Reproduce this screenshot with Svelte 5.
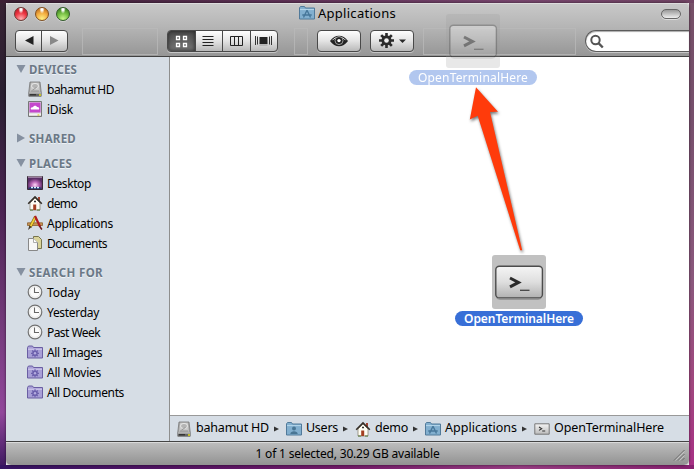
<script>
  const sections = [
    { name: 'DEVICES', w: 48, open: true, items: [['hd', 'bahamut HD', 67], ['idisk', 'iDisk', 26]] },
    { name: 'SHARED', w: 47, open: false, items: [] },
    { name: 'PLACES', w: 43, open: true, items: [['desktop', 'Desktop', 44], ['home', 'demo', 30], ['apps', 'Applications', 66], ['docs', 'Documents', 60]] },
    { name: 'SEARCH FOR', w: 74, open: true, items: [['clock', 'Today', 33], ['clock', 'Yesterday', 52], ['clock', 'Past Week', 53], ['smart', 'All Images', 55], ['smart', 'All Movies', 54], ['smart', 'All Documents', 77]] }
  ];
  const path = [['hd', 'bahamut HD', 73], ['users', 'Users', 32], ['home', 'demo', 33], ['appfolder', 'Applications', 72], ['term', 'OpenTerminalHere', 110]];
  const teeth = [0, 45, 90, 135, 180, 225, 270, 315];

  // Tracks a label out to the requested width.
  function fit(node, width) {
    const natural = node.getBoundingClientRect().width;
    node.style.letterSpacing = (width - natural) / node.textContent.length + 'px';
  }
</script>

{#snippet icon(kind)}
  <svg class="ic" width="16" height="16" viewBox="0 0 16 16">
    {#if kind === 'hd'}
      <path d="M3 1h10l1.2 10v4.3H1.8V11z" fill="#a9a9a9" stroke="#777" stroke-width=".8" />
      <path d="M4.2 1.8h7.6l1 8.7H3.2z" fill="#c9c9c9" />
      <ellipse cx="8" cy="5" rx="3.5" ry="2.6" fill="#b4b4b4" stroke="#efefef" stroke-width=".8" />
      <path d="M5.5 9l4-2.5M4 10h8" stroke="#8c8c8c" stroke-width=".9" />
      <path d="M1.8 11.5h12.4v3.8H1.8z" fill="#666" /><path d="M2 12h12" stroke="#ddd" />
      <path d="M3 13.8h6" stroke="#222" /><path d="M12 14h2" stroke="#e5df18" stroke-width="1.5" />
    {:else if kind === 'idisk'}
      <path d="M1.5.5h13v15h-13z" fill="#d8d8d8" stroke="#777" />
      <path d="M2.5 1.5h11v10h-11z" fill="#c446cc" />
      <path d="M4 8.5c-1-2 1-2.6 2-2.2.6-2 3.4-2 4-.3 2-.2 2.6 1.4 2 2.5z" fill="#fff" />
      <path d="M2 13.2h12" stroke="#fff" /><path d="M10.5 14h1.8" stroke="#d8c800" />
    {:else if kind === 'desktop'}
      <defs><radialGradient id="aurora" cx=".5" cy=".65"><stop offset="0" stop-color="#ffd8f6" /><stop offset=".5" stop-color="#b765b4" /><stop offset="1" stop-color="#5a2e66" /></radialGradient></defs>
      <path d="M.5 1.5h15v13H.5z" fill="url(#aurora)" stroke="#382939" />
      <path d="M1 2h14" stroke="#d5c6d6" /><path d="M1 14l2-2h10l2 2z" fill="#273a70" />
      <path d="M4 12.5h2m1 0h2m1 0h2" stroke="#d7f0ff" stroke-width="1.7" />
    {:else if kind === 'home'}
      <path d="M3 8l5-5 5 5v7H3z" fill="#fffdf3" stroke="#8e8775" stroke-width=".8" />
      <path d="M11 2h2v4h-2z" fill="#a04331" />
      <path d="M1.2 8.7L8 1.9l6.8 6.8" fill="none" stroke="#352f29" stroke-width="1.6" />
      <path d="M6.2 9.5h3V15h-3z" fill="#a33e20" /><path d="M7 6.5h2" stroke="#333" stroke-width="1.4" /><path d="M3 15h3M10 15h3" stroke="#527736" />
    {:else if kind === 'apps'}
      <path d="M.5 7.8h15v2.7H.5z" fill="#c79457" stroke="#815321" stroke-width=".7" />
      <path d="M8.6 1.5L3.2 12" stroke="#806412" stroke-width="2.9" /><path d="M8.6 1.5L3.5 11.5" stroke="#f2cd39" stroke-width="1.7" />
      <path d="M2.4 10.6L1 15l3.7-3z" fill="#473b2d" />
      <path d="M8 1l5 10.5" stroke="#b01c22" stroke-width="2.2" /><path d="M12.5 11l2.4 3.5" stroke="#70191d" stroke-width="1.5" />
    {:else if kind === 'docs'}
      <path d="M6.5 1.5h5l3 3v9h-8z" fill="#d9d39a" stroke="#77744d" />
      <path d="M1.5 3.5h5l4 4v8h-9z" fill="#f7f7f7" stroke="#888" /><path d="M6.5 3.5v4h4" fill="#fff" stroke="#999" stroke-width=".8" />
    {:else if kind === 'clock'}
      <circle cx="8" cy="8" r="6.8" fill="#fbfbfb" stroke="#727272" stroke-width="1.2" />
      <circle cx="8" cy="8" r="5.3" fill="none" stroke="#e1e1e1" stroke-width=".8" />
      <path d="M7.5 3.5v5H12" fill="none" stroke="#666" stroke-width="1.1" />
    {:else if kind === 'smart'}
      <path d="M.5 14V3.5L1.5 2h4l1 1.5h9V14z" fill="#a89fd6" stroke="#6a5ea3" />
      <path d="M1 5.2h14" stroke="#d5cff1" />
      <g fill="#6d61ad"><circle cx="8" cy="9.3" r="2.8" />{#each teeth as a}<path d="M7.4 5.3h1.2v2H7.4z" transform="rotate({a} 8 9.3)" />{/each}</g>
      <circle cx="8" cy="9.3" r="1.2" fill="#b4acdf" />
    {:else if kind === 'users' || kind === 'appfolder'}
      <path d="M.5 14V2.8L1.5 1.5h4l1 1.5h9v11z" fill="#82afcf" stroke="#517a9a" />
      <path d="M1 4.6h14" stroke="#b7d7ea" />
      {#if kind === 'users'}
        <circle cx="8" cy="7.5" r="2" fill="#487594" /><path d="M4.3 13c0-3.8 7.4-3.8 7.4 0z" fill="#487594" />
      {:else}
        <path d="M8 5.3L4.5 12.5M8 5.3l3.5 7.2M3.3 10h9.4" fill="none" stroke="#47779a" stroke-width="1.4" />
      {/if}
    {:else}
      <defs><linearGradient id="mini" x2="0" y2="1"><stop offset="0" stop-color="#f4f4f4" /><stop offset="1" stop-color="#bbb" /></linearGradient></defs>
      <path d="M.8 2.8h14.4v10.4H.8z" fill="url(#mini)" stroke="#777" />
      <path d="M5 6l2.7 1.7L5 9.4M8.2 10h3" fill="none" stroke="#333" stroke-width="1.1" />
    {/if}
  </svg>
{/snippet}

{#snippet terminal()}
  <span class="tile">
    <svg width="54" height="54" viewBox="0 0 54 54">
      <defs><linearGradient id="key" x2="0" y2="1"><stop offset="0" stop-color="#f5f5f5" /><stop offset=".5" stop-color="#dedede" /><stop offset="1" stop-color="#b1b1b1" /></linearGradient></defs>
      <rect x="4" y="12" width="46" height="32.5" rx="4" fill="none" stroke="#999" stroke-width="1" />
      <rect x="3.8" y="11.3" width="46.6" height="31.6" rx="3.5" fill="url(#key)" stroke="#4c4c4c" stroke-width="1.4" />
      <path d="M18 23l8.5 4.4-8.5 4.4" fill="none" stroke="#2b2b2b" stroke-width="3" />
      <path d="M28 35.3h9.5" stroke="#444" stroke-width="1.3" />
    </svg>
  </span>
{/snippet}

<div class="desktop">
  <div class="window">
    <header>
      <div class="title">
        <div class="lights"><i class="red"></i><i class="amber"></i><i class="green"></i></div>
        <div class="name">{@render icon('appfolder')}<span use:fit={78}>Applications</span></div>
        <i class="pill"></i>
      </div>
      <div class="tools">
        <div class="group nav">
          <b><svg width="26" height="20"><path d="M17.5 5v9L9 9.5z" fill="#222" /></svg></b>
          <b><svg width="26" height="20"><path d="M8 5v9l8.5-4.5z" fill="#888" /></svg></b>
        </div>
        <i class="space one"></i>
        <div class="group views">
          <b class="on"><svg width="27" height="20"><path d="M8.5 5.5h3v3h-3zM15.5 5.5h3v3h-3zM8.5 12.5h3v3h-3zM15.5 12.5h3v3h-3z" fill="none" stroke="#fff" stroke-width="1.3" /></svg></b>
          <b><svg width="27" height="20"><path d="M7.5 5.5h11M7.5 8.5h11M7.5 11.5h11M7.5 14.5h11" stroke="#222" /></svg></b>
          <b><svg width="27" height="20"><path d="M7.5 5.5h12v9h-12zM11.5 5.5v9M15.5 5.5v9" fill="none" stroke="#222" /></svg></b>
          <b><svg width="27" height="20"><path d="M9.5 6h8v7h-8z" fill="#222" /><path d="M5.5 5v9M7.5 5.5v8M19.5 5.5v8M21.5 5v9" stroke="#333" /><path d="M9.5 14h8" stroke="#999" /></svg></b>
        </div>
        <i class="space two"></i>
        <div class="group single">
          <b><svg width="42" height="20"><path d="M12 10c5-7 13-7 18 0-5 7-13 7-18 0z" fill="#222" /><path d="M14.5 9.2c3-4 10-4 13 0" fill="none" stroke="#ddd" /><circle cx="21" cy="9.6" r="4" fill="#222" stroke="#bbb" stroke-width=".8" /><circle cx="21" cy="9.6" r="1.7" fill="#fff" /></svg></b>
        </div>
        <div class="group single">
          <b><svg width="42" height="20"><g fill="#2a2a2a"><circle cx="15.5" cy="9.5" r="5" />{#each teeth as a}<path d="M14.2 2h2.6v4h-2.6z" transform="rotate({a} 15.5 9.5)" />{/each}<path d="M28 8.5h7L31.5 12z" /></g><circle cx="15.5" cy="9.5" r="2.3" fill="#eee" /></svg></b>
        </div>
        <i class="space three"></i>
        <div class="search"><svg width="18" height="18"><circle cx="6.5" cy="6" r="4.2" fill="none" stroke="#555" stroke-width="2" /><path d="M9.5 9.2l4.3 4.3" stroke="#555" stroke-width="2.4" /></svg></div>
      </div>
    </header>

    <div class="body">
      <aside>
        {#each sections as s}
          <section class:closed={!s.open}>
            <h2>
              <svg width="10" height="10"><path d={s.open ? 'M.5 1h9L5 9z' : 'M1 .5v9L9 5z'} fill="#8590a0" /></svg>
              <span use:fit={s.w}>{s.name}</span>
            </h2>
            {#each s.items as [k, label, w]}
              <div class="row">{@render icon(k)}<span use:fit={w}>{label}</span></div>
            {/each}
          </section>
        {/each}
      </aside>
      <main>
        <div class="canvas"></div>
        <nav>
          {#each path as [k, label, w], n}
            {#if n}<svg class="sep" width="6" height="6"><path d="M0 .5v5L5 3z" fill="#333" /></svg>{/if}
            {@render icon(k)}<span use:fit={w}>{label}</span>
          {/each}
        </nav>
      </main>
    </div>

    <footer>
      <span use:fit={184}>1 of 1 selected, 30.29 GB available</span>
      <svg class="grip" width="12" height="12"><path d="M1 11.5L11.5 1M5 11.5L11.5 5M9 11.5L11.5 9" stroke="#666" /><path d="M2.3 11.5l9-9M6.3 11.5l5-5" stroke="#ddd" stroke-width=".7" /></svg>
    </footer>
  </div>

  <div class="file ghost">{@render terminal()}<span class="label"><span use:fit={110}>OpenTerminalHere</span></span></div>
  <div class="file picked">{@render terminal()}<span class="label"><span use:fit={110}>OpenTerminalHere</span></span></div>
  <svg class="arrow" width="70" height="180" viewBox="0 0 70 180">
    <path d="M16 7.3L38 31.8 30 32 62.2 170.3 60.2 170.3 17.7 35.7 9.8 39.5z" fill="#ff3b0b" />
  </svg>
</div>

<style>
  .desktop {
    position: relative; width: 694px; height: 469px; overflow: hidden; box-sizing: border-box; padding: 3px 5px 4px 6px;
    font: 12px/20px "Noto Sans", "Open Sans", sans-serif; color: #000;
    background:
      linear-gradient(90deg, #3c2034, #5d3155 40%, #79476f 75%, #704463) 0 0 / 100% 3px no-repeat,
      linear-gradient(90deg, #351463, #531462 25%, #731a68 50%, #973c82 75%, #86216f) 0 100% / 100% 4px no-repeat,
      linear-gradient(#382333, #291f31 20%, #4c2453 45%, #753b7c 70%, #92479b 88%, #3a175e) 0 0 / 6px 100% no-repeat,
      linear-gradient(#765068, #77506d 25%, #8b587d 60%, #a1477f 82%, #a82f85) 100% 0 / 5px 100% no-repeat;
  }
  span { white-space: nowrap; }
  svg { display: block; flex: none; }
  .window { height: 462px; display: flex; flex-direction: column; border-radius: 5px; overflow: hidden; box-shadow: 0 0 3px #0009; }
  header { height: 54px; box-sizing: border-box; border-bottom: 1px solid #414141; background: linear-gradient(#c9c9c9, #b5b5b5 45%, #969696); box-shadow: inset 0 1px #ddd; }
  .title { height: 24px; display: grid; grid-template-columns: 1fr auto 1fr; align-items: center; padding: 0 8px; box-sizing: border-box; }
  .lights { display: flex; gap: 7px; margin-top: -2px; }
  .lights i { width: 14px; height: 14px; box-sizing: border-box; border: 1px solid #6b3b36; border-radius: 50%; box-shadow: 0 1px #ddd9; }
  .red { background: radial-gradient(ellipse at 50% 5%, #fff 0 12%, transparent 32%), radial-gradient(circle at 50% 90%, #ffb4b4, #ed3541 50%, #a51625); }
  .amber { background: radial-gradient(ellipse at 50% 5%, #fff 0 12%, transparent 32%), radial-gradient(circle at 50% 90%, #fff184, #f3ab3f 50%, #a95a17); }
  .green { background: radial-gradient(ellipse at 50% 5%, #fff 0 12%, transparent 32%), radial-gradient(circle at 50% 90%, #c8f88b, #70ba3e 50%, #28671b); }
  .lights .green { border-color: #315b28; }
  .lights .amber { border-color: #80501f; }
  .name { display: flex; gap: 3px; align-items: center; font-size: 13px; height: 20px; padding-bottom: 4px; }
  .name span { line-height: 18px; }
  .pill { justify-self: end; margin-top: -2px; width: 20px; height: 10px; box-sizing: border-box; border: 1px solid #666; border-radius: 5px; background: linear-gradient(#999, #eee); box-shadow: 0 1px #ddd; }
  .tools { display: flex; height: 28px; padding-left: 9px; align-items: center; }
  .group { display: flex; height: 22px; box-sizing: border-box; flex: none; border: 1px solid #494949; border-radius: 4px; background: linear-gradient(#fdfdfd, #e3e3e3 50%, #b9b9b9); box-shadow: 0 1px #c6c6c6; overflow: hidden; }
  .group b { flex: 1 1 0; min-width: 0; display: flex; justify-content: center; }
  .group b + b { border-left: 1px solid #494949; }
  .nav { width: 53px; }
  .views { width: 111px; }
  .single { width: 44px; margin-right: 9px; }
  .on { background: linear-gradient(#4b4b4b, #777); box-shadow: inset 0 0 4px #222; }
  .space { height: 27px; box-sizing: border-box; border: 1px solid #bababa; flex: none; opacity: .75; }
  .one { width: 76px; margin: 0 9px 0 14px; }
  .two { width: 14px; margin: 0 9px 0 16px; }
  .three { width: 153px; margin-right: 9px; }
  .search { flex: 1; height: 22px; box-sizing: border-box; border: 1px solid #5b5b5b; border-right: 0; border-radius: 11px 0 0 11px; background: #fff; box-shadow: 0 1px #c6c6c6, inset 0 1px 1px #aaa; padding: 3px 0 0 3px; }
  .body { flex: 1; display: flex; min-height: 0; }
  aside { width: 163px; background: #d6dde5; border-right: 1px solid #8e8e8e; padding-top: 2px; box-sizing: content-box; }
  section { padding-bottom: 9px; }
  section.closed { padding-bottom: 5px; }
  h2 { margin: 0; padding-left: 10px; height: 20px; display: flex; align-items: center; gap: 3px; font-size: 11.5px; font-weight: 700; color: #6b7886; text-shadow: 0 1px #eef2f6; }
  .row { display: flex; height: 20px; align-items: center; gap: 4px; padding-left: 21px; }
  .row span, h2 span { padding-top: 1px; line-height: 19px; }
  main { flex: 1; display: flex; flex-direction: column; min-width: 0; }
  .canvas { flex: 1; background: #fff; }
  nav { height: 26px; box-sizing: border-box; border-top: 1px solid #999; background: #d6dde5; display: flex; align-items: center; padding-left: 6px; font-size: 12.5px; }
  nav .ic { margin-right: 4px; }
  nav span { line-height: 20px; padding-bottom: 1px; }
  .sep { margin: 0 6px 0 5px; }
  footer { height: 24px; box-sizing: border-box; border-top: 1px solid #444; background: linear-gradient(#dadada 0 1px, #bcbcbc 1px, #929292); display: grid; grid-template-columns: 1fr auto 1fr; align-items: center; }
  footer span { grid-column: 2; padding-top: 1px; }
  .grip { justify-self: end; align-self: end; margin: 0 4px 4px; }
  .file { position: absolute; display: flex; flex-direction: column; align-items: center; }
  .tile { width: 54px; height: 54px; background: #c1c1c1; border-radius: 3px; }
  .label { margin-top: 2px; height: 15px; line-height: 15px; border-radius: 8px; background: #386fd7; color: #fff; padding: 0 9px; width: 110px; }
  .ghost { left: 409px; top: 14px; opacity: .38; width: 128px; }
  .ghost .tile { background: #9a9a9a99; }
  .picked { left: 455px; top: 255px; width: 128px; }
  .picked .label { font-weight: 600; }
  .arrow { position: absolute; left: 460px; top: 80px; filter: drop-shadow(1px 2px 1.5px #0008); }
</style>
